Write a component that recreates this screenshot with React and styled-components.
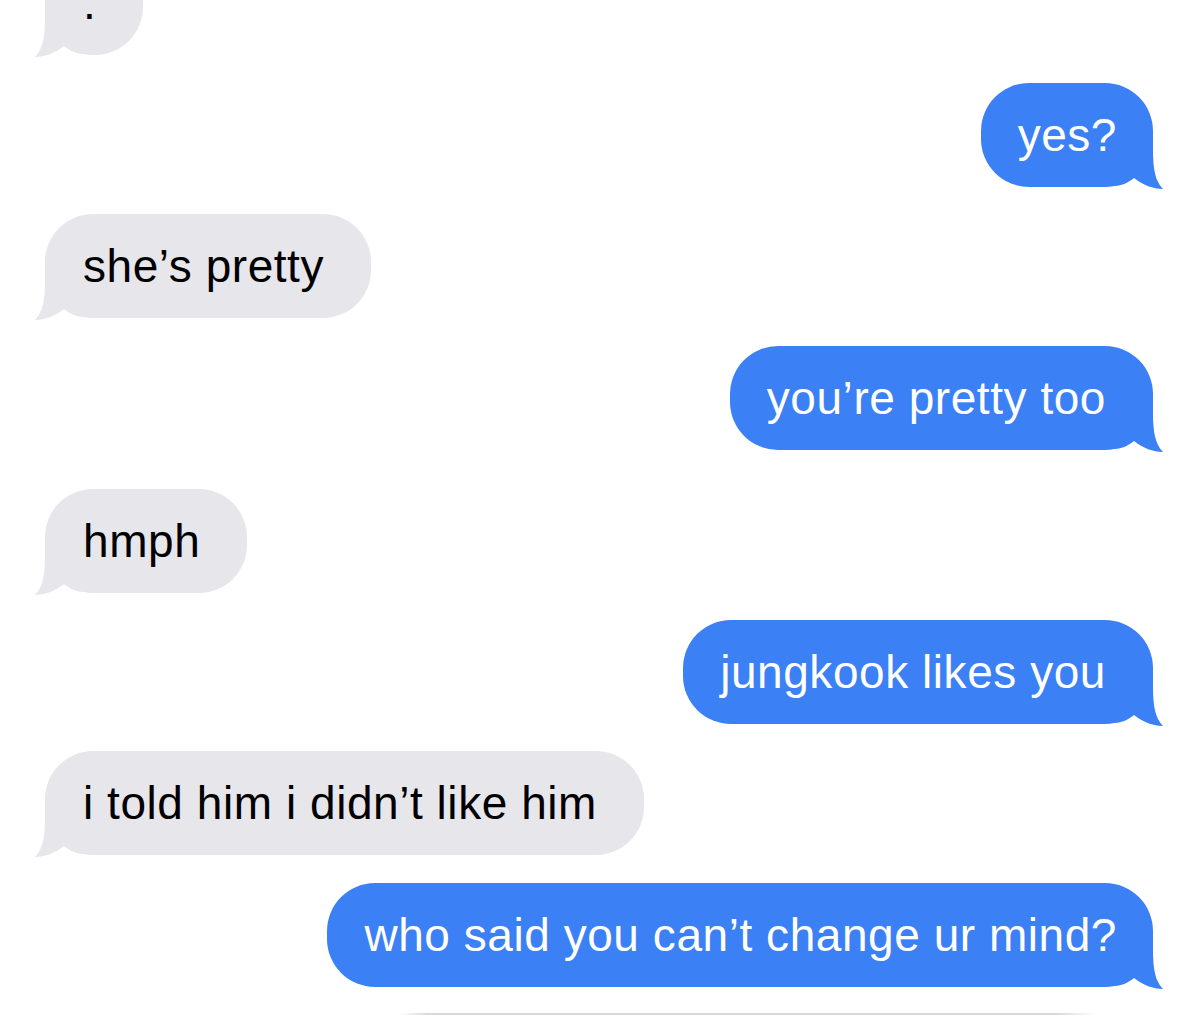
import React from 'react';
import styled, { createGlobalStyle } from 'styled-components';

const messages = [
    { me: false, text: '.' },
    { me: true, text: 'yes?', gap: 28 },
    { me: false, text: 'she’s pretty' },
    { me: true, text: 'you’re pretty too', gap: 28, wide: true },
    { me: false, text: 'hmph', gap: 39 },
    { me: true, text: 'jungkook likes you', wide: true },
    { me: false, text: 'i told him i didn’t like him' },
    { me: true, text: 'who said you can’t change ur mind?', gap: 28 },
];

export default function App() {
    return (
        <>
            <GlobalStyle />
            <Thread>
                {messages.map((m, i) => (
                    <Row key={i} $me={m.me} $gap={m.gap}>
                        <Bubble $me={m.me} $wide={m.wide}>
                            {m.text}
                            <Tail $me={m.me} viewBox="0 0 50 54">
                                <path d="M0,0 H40 V14 C40,32 42,45 50,53 C40,53 30,49 21,42 C15,47 8,50 0,50 Z" />
                            </Tail>
                        </Bubble>
                    </Row>
                ))}
                <Divider />
            </Thread>
        </>
    );
}

const GlobalStyle = createGlobalStyle`
    html, body {
        margin: 0;
        padding: 0;
        background: #FFFFFF;
        height: 1015px;
        overflow: hidden;
    }
`

const Thread = styled.div`
    display: flex;
    flex-direction: column;
    padding: 0 47px 0 45px;
    font-family: "Liberation Sans", Arial, sans-serif;
`

const Row = styled.div`
    display: flex;
    justify-content: ${p => p.$me ? 'flex-end' : 'flex-start'};
    margin-top: ${p => p.$gap || 27}px;

    &:first-child {
        margin-top: -49px;
    }
`

const Bubble = styled.div`
    position: relative;
    isolation: isolate;
    height: 104px;
    line-height: 104px;
    padding: ${p => p.$me ? `0 ${p.$wide ? 47 : 36}px 0 37px` : '0 47px 0 38px'};
    border-radius: 48px;
    background: ${p => p.$me ? '#3B80F4' : '#E6E6EB'};
    color: ${p => p.$me ? '#FFFFFF' : '#000000'};
    font-size: 46px;
    letter-spacing: 0.55px;
    white-space: nowrap;
`

const Tail = styled.svg`
    position: absolute;
    z-index: -1;
    bottom: -3px;
    width: 50px;
    height: 54px;
    fill: ${p => p.$me ? '#3B80F4' : '#E6E6EB'};
    ${p => p.$me ? 'right: -10px;' : 'left: -10px; transform: scaleX(-1);'}
`

const Divider = styled.div`
    align-self: flex-end;
    margin: 26px 56px 0 0;
    width: 697px;
    height: 2px;
    background: linear-gradient(90deg, rgba(216,216,216,0), #D8D8D8 4%, #D8D8D8 94%, rgba(216,216,216,0));
`
